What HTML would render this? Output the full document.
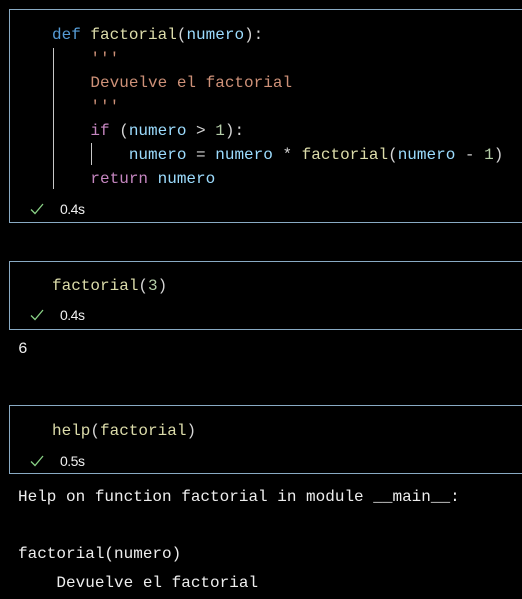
<!DOCTYPE html>
<html><head><meta charset="utf-8"><style>
html,body{margin:0;padding:0;background:#000;width:522px;height:599px;overflow:hidden;position:relative}
.box{position:absolute;left:9px;width:530px;border:1px solid #89aac4;box-sizing:border-box}
.code{position:absolute;font-family:"Liberation Mono",monospace;font-size:16px;white-space:pre;line-height:24px;color:#d4d4d4}
.k{color:#569cd6}.f{color:#dcdcaa}.v{color:#9cdcfe}.s{color:#ce9178}.c{color:#c586c0}.n{color:#b5cea8}
.st{position:absolute;font-family:"Liberation Sans",sans-serif;font-size:14px;color:#f0f0f0;letter-spacing:-0.5px}
.ck{position:absolute;width:14px;height:12px}
.g{position:absolute;width:1px;background:#c8c8c8}
.out{position:absolute;left:18px;font-family:"Liberation Mono",monospace;font-size:16px;white-space:pre;color:#eeeeee}
</style></head><body>
<div class="box" style="top:9px;height:214px"></div>
<div class="code" style="left:52px;top:23px"><span class="k">def</span> <span class="f">factorial</span>(<span class="v">numero</span>):
    <span class="s">'''</span>
    <span class="s">Devuelve el factorial</span>
    <span class="s">'''</span>
    <span class="c">if</span> (<span class="v">numero</span> &gt; <span class="n">1</span>):
        <span class="v">numero</span> = <span class="v">numero</span> * <span class="f">factorial</span>(<span class="v">numero</span> - <span class="n">1</span>)
    <span class="c">return</span> <span class="v">numero</span></div>
<div class="g" style="left:53px;top:48px;height:141px"></div>
<div class="g" style="left:91px;top:143px;height:22px"></div>
<svg class="ck" style="left:30px;top:203px" viewBox="0 0 14 12"><path d="M1 6.5 L5 10.5 L13 1" fill="none" stroke="#89d185" stroke-width="1.3"/></svg>
<div class="st" style="left:60px;top:201px">0.4s</div>

<div class="box" style="top:261px;height:69px"></div>
<div class="code" style="left:52px;top:274px"><span class="f">factorial</span>(<span class="n">3</span>)</div>
<svg class="ck" style="left:30px;top:309px" viewBox="0 0 14 12"><path d="M1 6.5 L5 10.5 L13 1" fill="none" stroke="#89d185" stroke-width="1.3"/></svg>
<div class="st" style="left:60px;top:307px">0.4s</div>
<div class="out" style="top:340px">6</div>

<div class="box" style="top:405px;height:69px"></div>
<div class="code" style="left:52px;top:419px"><span class="f">help</span>(<span class="f">factorial</span>)</div>
<svg class="ck" style="left:30px;top:455px" viewBox="0 0 14 12"><path d="M1 6.5 L5 10.5 L13 1" fill="none" stroke="#89d185" stroke-width="1.3"/></svg>
<div class="st" style="left:60px;top:453px">0.5s</div>
<div class="out" style="top:483px;line-height:28.5px">Help on function factorial in module __main__:

factorial(numero)
    Devuelve el factorial</div>
</body></html>
